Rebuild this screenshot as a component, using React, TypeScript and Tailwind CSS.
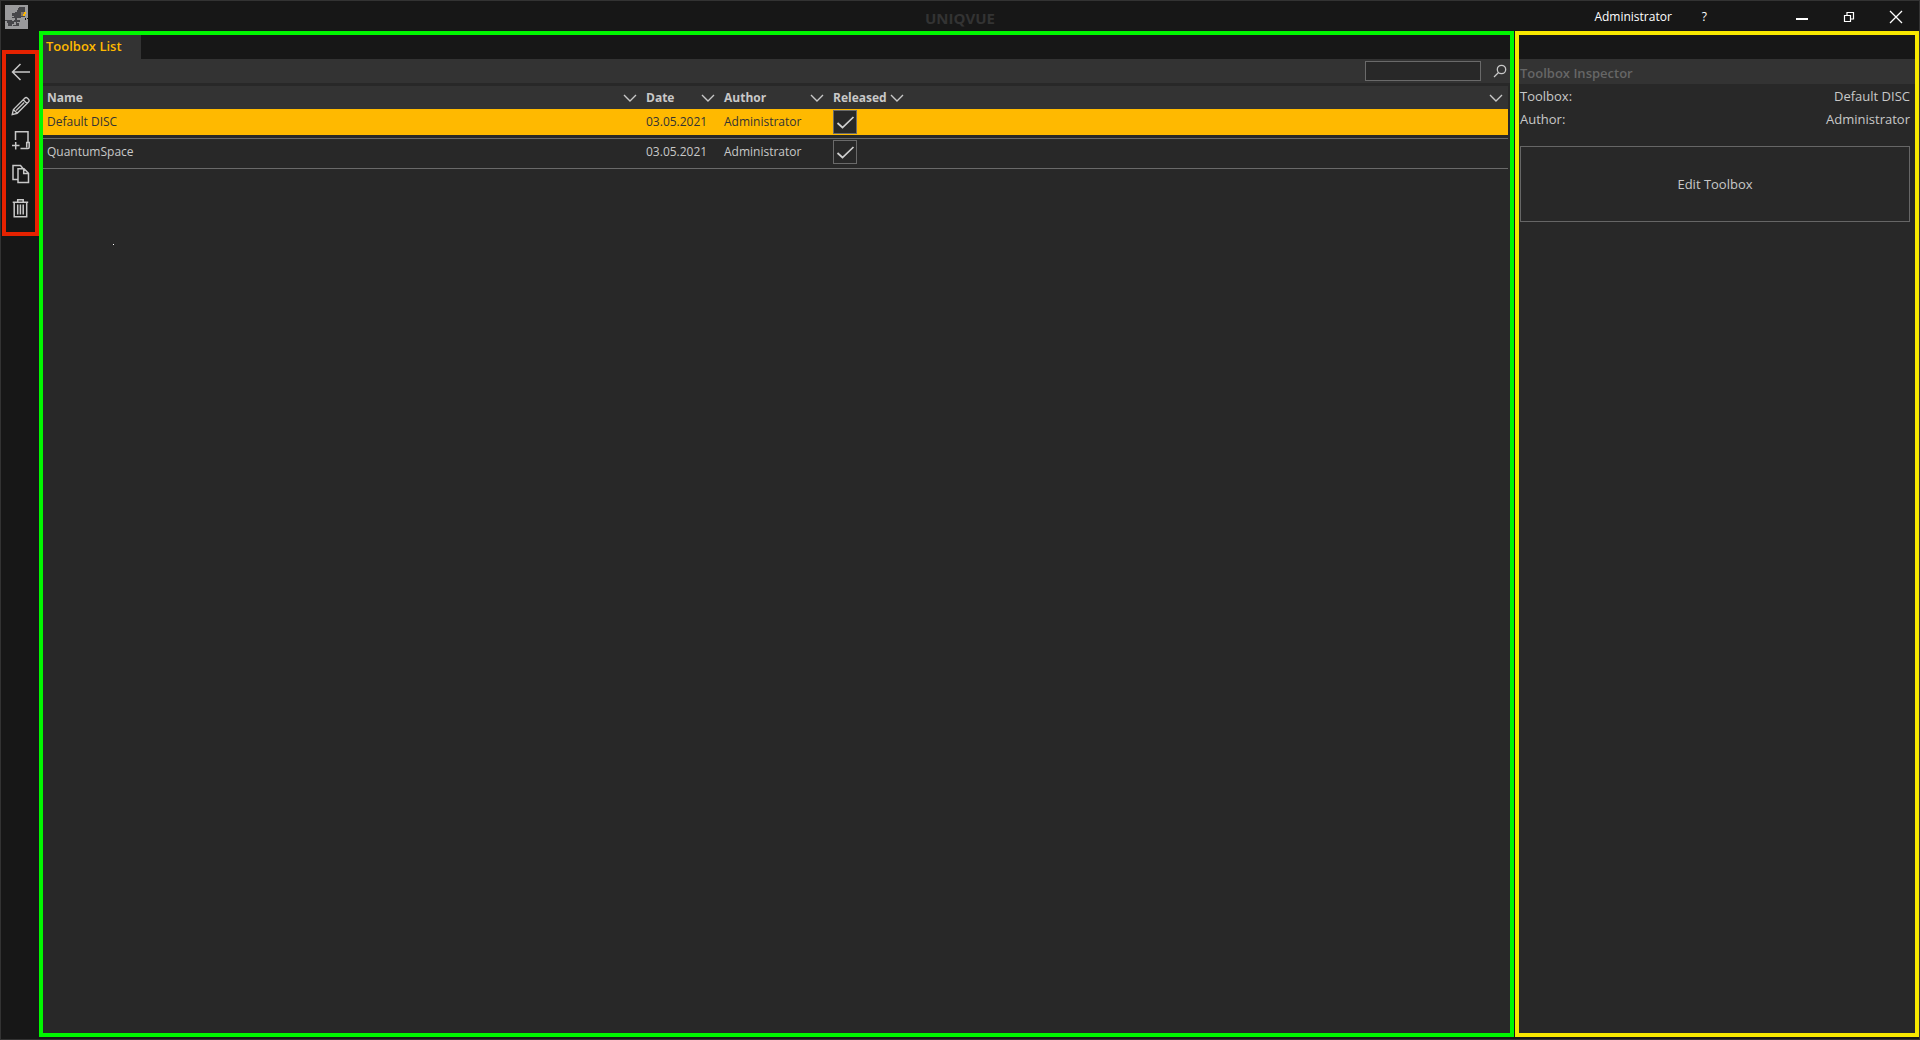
import React from "react";

const Svg = ({ size, children }: { size: number; children: React.ReactNode }) => (
  <svg width={size} height={size} viewBox={`0 0 ${size} ${size}`} fill="none" stroke="currentColor" strokeWidth="1.5" aria-hidden="true">
    {children}
  </svg>
);

const BackIcon = () => (
  <Svg size={20}><path d="M19 10H1.500M9.500 2 1.500 10l8 8" /></Svg>
);
const PencilIcon = () => (
  <Svg size={20}>
    <path d="M1.200 18.500 2.400 13.500 13.700 2.200a2 2 0 0 1 2.800 0l1 1a2 2 0 0 1 0 2.800L6.200 17.300zM2.400 13.500 6.200 17.300M12.200 3.700l3.800 3.800M5.200 14.500l8-8" strokeWidth="1.3" />
  </Svg>
);
const AddIcon = () => (
  <Svg size={20}>
    <path d="M4.500 10V1.700H17V12.500M9.500 18.500h7.500a1.200 1.200 0 0 0 1.200-1.200V12.500h-2.500v5M1 15.500h7.500M4.700 12v7.500" />
  </Svg>
);
const CopyIcon = () => (
  <Svg size={20}>
    <path d="M6.500 15.500H2v-14h7.500l2.500 3M7 4.700h6l4.500 4.500v9.300H7zM12.700 5v4.500h4.800" />
  </Svg>
);
const TrashIcon = () => (
  <Svg size={20}>
    <path d="M1.700 4.200h15.500M6.700 4V1.700h5.500V4M3.200 4.500v14.200h12.500V4.500M6.700 6.500v10M9.400 6.500v10M12.200 6.500v10" />
  </Svg>
);
const Chevron = () => (
  <svg width="14" height="8" viewBox="0 0 14 8" fill="none" stroke="currentColor" strokeWidth="1.4" aria-hidden="true">
    <path d="M1 1l6 6 6-6" />
  </svg>
);

const Logo = () => (
  <svg width="23" height="24" viewBox="0 0 23 24" aria-hidden="true">
    <path fill="#9a9a9c" d="M0 0h23v24H0z" />
    <path fill="#46464a" d="M14 2h6v5h-3v4h3v1h-4v1h-4v2h3v2h-3v1h2v3H8v-1h3v-3H9v2H7v2H3v-3H2v-2H0v-1h7v1h2v-1h1v-2H7v-1h2v-1H7V8h3V7h2V5h1V3h1z" />
    <path fill="#8b7a66" d="M16 7h3v4h-3z" />
    <path fill="#ffb900" d="M19 7h2v2h-2zM18 9h2v2h-2z" />
    <path fill="#151515" d="M20 13h1v2h-1zM22 13h1v1h-1z" />
  </svg>
);

const tools = [
  { label: "Back", Icon: BackIcon },
  { label: "Edit", Icon: PencilIcon },
  { label: "New", Icon: AddIcon },
  { label: "Duplicate", Icon: CopyIcon },
  { label: "Delete", Icon: TrashIcon },
];

const rows = [
  { name: "Default DISC", date: "03.05.2021", author: "Administrator", selected: true },
  { name: "QuantumSpace", date: "03.05.2021", author: "Administrator", selected: false },
];

const HeaderCell = ({ children }: { children?: React.ReactNode }) => (
  <th scope="col" className="h-[23px] p-0 font-bold">
    <div className="flex items-center justify-between pr-[5px] pl-1">
      <span>{children}</span>
      <button type="button" aria-label="Filter column"><Chevron /></button>
    </div>
  </th>
);

const Cell = ({ selected, children }: { selected: boolean; children?: React.ReactNode }) => (
  <td className="p-0 pb-[3px]">
    <div className={selected ? "flex h-[26px] items-center bg-[#ffb900] pl-1 text-[#333333]" : "flex h-[26px] items-center pl-1"}>
      {children}
    </div>
  </td>
);

const ReleasedBox = ({ label }: { label: string }) => (
  <label className="relative block size-6 border border-[#6a6a6a] bg-[#282828] text-[#d0d0d0]">
    <input type="checkbox" defaultChecked aria-label={label} className="peer absolute inset-0 size-full appearance-none" />
    <svg className="pointer-events-none invisible peer-checked:visible" width="22" height="22" viewBox="0 0 22 22" fill="none" stroke="currentColor" strokeWidth="1.7" aria-hidden="true">
      <path d="M3.500 12l5 4.500L19.500 6" />
    </svg>
  </label>
);

export default function App() {
  return (
    <div className="flex h-screen flex-col border border-[#333333] bg-[#171717] pb-0.5 font-['Open_Sans','Noto_Sans',sans-serif] text-xs text-[#c8c8c8]">
      <header className="grid h-[30px] shrink-0 grid-cols-[1fr_auto_1fr] items-center pt-0.5">
        <div className="pl-1"><Logo /></div>
        <h1 className="pt-0.5 text-[15px] leading-5 font-bold text-[#333333]">UNIQVUE</h1>
        <div className="flex items-center justify-end pr-4 text-white">
          <button type="button" className="mr-[30px]">Administrator</button>
          <button type="button" className="mr-[88px]">?</button>
          <div className="flex items-center gap-[34px]">
            <button type="button" aria-label="Minimize">
              <svg width="14" height="14" viewBox="0 0 14 14"><path fill="currentColor" d="M1 8h12v2H1z" /></svg>
            </button>
            <button type="button" aria-label="Restore">
              <svg width="12" height="12" viewBox="0 0 12 12" fill="none" stroke="currentColor" strokeWidth="1.2"><path d="M1.500 4.500h6v6h-6zM4 4V1.500h6.500V8H8" /></svg>
            </button>
            <button type="button" aria-label="Close">
              <svg width="14" height="14" viewBox="0 0 14 14" fill="none" stroke="currentColor" strokeWidth="1.3"><path d="M1 1l12 12M13 1 1 13" /></svg>
            </button>
          </div>
        </div>
      </header>

      <div className="flex min-h-0 flex-1">
        <nav aria-label="Toolbox actions" className="w-[38px] shrink-0 pt-[19px] pl-px">
          <div className="flex flex-col items-center gap-3.5 border-4 border-[#e62200] pt-2 pb-3.5">
            {tools.map(({ label, Icon }) => (
              <button key={label} type="button" aria-label={label}><Icon /></button>
            ))}
          </div>
        </nav>

        <main className="mr-px flex min-w-0 flex-1 flex-col border-4 border-[#00f800] bg-[#282828]">
          <div role="tablist" className="flex h-6 shrink-0 bg-[#171717]">
            <button type="button" role="tab" aria-selected="true" className="w-[98px] bg-[#333333] pl-[3px] text-left text-[13px] font-semibold text-[#ffb900]">Toolbox List</button>
          </div>
          <div className="mb-[3px] flex h-6 shrink-0 items-center justify-end gap-3 bg-[#333333] pr-[3px]">
            <input type="search" aria-label="Search toolboxes" className="h-5 w-[116px] border border-[#6a6a6a] bg-[#282828] px-1 outline-none" />
            <button type="button" aria-label="Search">
              <svg width="14" height="14" viewBox="0 0 14 14" fill="none" stroke="currentColor" strokeWidth="1.3"><circle cx="8.500" cy="5.500" r="4.200" /><path d="M5.500 8.500 1 13" /></svg>
            </button>
          </div>
          <div className="pr-0.5">
            <table className="w-full table-fixed border-separate border-spacing-0 text-left [&_tbody_td]:border-b [&_tbody_td]:border-[#6a6a6a]">
              <colgroup>
                <col className="w-[599px]" /><col className="w-[78px]" /><col className="w-[109px]" /><col className="w-[80px]" /><col />
              </colgroup>
              <thead className="bg-[#333333]">
                <tr><HeaderCell>Name</HeaderCell><HeaderCell>Date</HeaderCell><HeaderCell>Author</HeaderCell><HeaderCell>Released</HeaderCell><HeaderCell /></tr>
              </thead>
              <tbody>
                {rows.map((r) => (
                  <tr key={r.name} aria-selected={r.selected}>
                    <Cell selected={r.selected}>{r.name}</Cell>
                    <Cell selected={r.selected}>{r.date}</Cell>
                    <Cell selected={r.selected}>{r.author}</Cell>
                    <Cell selected={r.selected}><ReleasedBox label={`${r.name} released`} /></Cell>
                    <Cell selected={r.selected} />
                  </tr>
                ))}
              </tbody>
            </table>
          </div>
          <div className="mt-[75px] ml-[70px] size-px shrink-0 bg-white" />
        </main>

        <aside aria-label="Toolbox Inspector" className="w-[404px] shrink-0 border-4 border-[#f8e800] bg-[#282828] text-[13px] leading-5">
          <div className="h-6 bg-[#171717]" />
          <h2 className="flex h-[25px] items-center bg-[#333333] pt-0.5 pl-px font-semibold text-[#666666]">Toolbox Inspector</h2>
          <dl className="grid grid-cols-[auto_1fr] gap-y-[3px] pt-0.5 pr-[5px] pl-px">
            <dt>Toolbox:</dt><dd className="text-right">Default DISC</dd>
            <dt>Author:</dt><dd className="text-right">Administrator</dd>
          </dl>
          <div className="pt-[17px] pr-[5px] pl-px">
            <button type="button" className="h-[76px] w-full border border-[#666666] font-medium">Edit Toolbox</button>
          </div>
        </aside>
      </div>
    </div>
  );
}
